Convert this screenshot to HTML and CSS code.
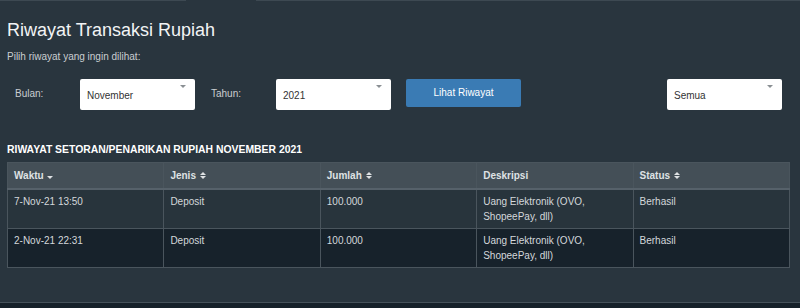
FILE: index.html
```html
<!DOCTYPE html>
<html lang="id">
  <head>
    <meta charset="UTF-8" />
    <meta name="viewport" content="width=device-width, initial-scale=1" />
    <title>Riwayat Transaksi Rupiah</title>
    <link rel="stylesheet" href="styles.css">
  </head>
  <body>
    <!-- tab strip -->
    <div class="tab-strip">
      <span class="tab-line tab-left"></span>
      <span class="tab-gap"></span>
      <span class="tab-line tab-right"></span>
    </div>

    <main class="content">
      <h1 class="page-title">Riwayat Transaksi Rupiah</h1>
      <p class="hint">Pilih riwayat yang ingin dilihat:</p>

      <!-- filter -->
      <form class="filters" onsubmit="return false">
        <label class="filter-label label-bulan" for="bulan">Bulan:</label>
        <div class="select">
          <select id="bulan">
            <option>November</option>
          </select>
        </div>
        <label class="filter-label label-tahun" for="tahun">Tahun:</label>
        <div class="select">
          <select id="tahun">
            <option>2021</option>
          </select>
        </div>
        <button class="btn-primary" type="submit">Lihat Riwayat</button>
        <div class="select select-type">
          <select id="jenis">
            <option>Semua</option>
          </select>
        </div>
      </form>

      <h2 class="section-title">RIWAYAT SETORAN/PENARIKAN RUPIAH NOVEMBER 2021</h2>

      <!-- table -->
      <table class="history">
        <thead>
          <tr>
            <th>Waktu
              <svg class="sort" width="6" height="9" viewBox="0 0 6 9"><polygon points="0,5 6,5 3,8" /></svg>
            </th>
            <th>Jenis
              <svg class="sort" width="6" height="9" viewBox="0 0 6 9"><polygon points="0,4 3,1 6,4" /><polygon points="0,5 6,5 3,8" /></svg>
            </th>
            <th>Jumlah
              <svg class="sort" width="6" height="9" viewBox="0 0 6 9"><polygon points="0,4 3,1 6,4" /><polygon points="0,5 6,5 3,8" /></svg>
            </th>
            <th>Deskripsi</th>
            <th>Status
              <svg class="sort" width="6" height="9" viewBox="0 0 6 9"><polygon points="0,4 3,1 6,4" /><polygon points="0,5 6,5 3,8" /></svg>
            </th>
          </tr>
        </thead>
        <tbody>
          <tr>
            <td>7-Nov-21 13:50</td>
            <td>Deposit</td>
            <td>100.000</td>
            <td>Uang Elektronik (OVO,<br>ShopeePay, dll)</td>
            <td>Berhasil</td>
          </tr>
          <tr>
            <td>2-Nov-21 22:31</td>
            <td>Deposit</td>
            <td>100.000</td>
            <td>Uang Elektronik (OVO,<br>ShopeePay, dll)</td>
            <td>Berhasil</td>
          </tr>
        </tbody>
      </table>
    </main>

    <footer class="page-footer"></footer>
  </body>
</html>
```

FILE: styles.css
```css
body {
  margin: 0;
  font-family: "Liberation Sans", Arial, sans-serif;
  background: #29353e;
  color: #d6dadd;
  overflow: hidden;
}

.tab-strip {
  display: flex;
  height: 1px;
}

.tab-line {
  background: #3d4952;
}

.tab-left {
  width: 186px;
}

.tab-gap {
  width: 70px;
}

.tab-right {
  flex: 1;
}

.content {
  padding: 0 10px 0 7px;
}

.page-title {
  margin: 18px 0 0;
  font-size: 18px;
  line-height: 22px;
  font-weight: normal;
  color: #f2f4f5;
}

.hint {
  margin: 9px 0 0;
  font-size: 10px;
  line-height: 14px;
  color: #c9ced1;
}

/* Filter row */
.filters {
  display: flex;
  align-items: flex-start;
  margin-top: 15px;
  padding: 0 8px 0 8px;
}

.filter-label {
  font-size: 10px;
  line-height: 30px;
  color: #c9ced1;
}

.label-bulan {
  width: 65px;
}

.label-tahun {
  width: 65px;
  margin-left: 16px;
}

.select {
  position: relative;
  width: 115px;
  height: 31px;
  background: #fff;
  border-radius: 2px;
}

.select select {
  appearance: none;
  -webkit-appearance: none;
  width: 100%;
  height: 100%;
  margin: 0;
  border: none;
  background: transparent;
  padding: 1px 0 0 7px;
  font-family: "Liberation Sans", Arial, sans-serif;
  font-size: 10px;
  color: #333;
  outline: none;
}

.select::after {
  content: "";
  position: absolute;
  top: 6px;
  right: 9px;
  border-left: 3px solid transparent;
  border-right: 3px solid transparent;
  border-top: 3px solid #8a8f93;
  pointer-events: none;
}

.select-type {
  margin-left: auto;
}

.btn-primary {
  width: 115px;
  height: 28px;
  margin-left: 15px;
  background: #3a7bb4;
  color: #fff;
  border: none;
  border-radius: 2px;
  font-family: "Liberation Sans", Arial, sans-serif;
  font-size: 10px;
  padding: 0 0 2px;
  cursor: pointer;
}

.section-title {
  margin: 33px 0 0;
  font-size: 10.4px;
  line-height: 14px;
  font-weight: bold;
  color: #fff;
}

/* Table */
.history {
  width: 783px;
  margin-top: 5px;
  border-collapse: collapse;
  table-layout: fixed;
  font-size: 10px;
  line-height: 15px;
}

.history th,
.history td {
  border: 1px solid #4a555d;
  text-align: left;
  vertical-align: top;
}

.history th {
  padding: 5px 6px;
  background: #444f57;
  color: #dfe2e4;
  font-weight: bold;
  border-bottom: 2px solid #56616a;
}

.history td {
  padding: 4px 6px;
  color: #d4d8db;
}

.history tbody tr:nth-child(1) td {
  background: #28343c;
}

.history tbody tr:nth-child(2) td {
  background: #17222b;
}

.sort {
  fill: #dfe2e4;
  vertical-align: -1px;
  margin-left: 1px;
}

.page-footer {
  margin-top: 34px;
  height: 5px;
  border-top: 1px solid #46525b;
  background: #16212a;
}
```
